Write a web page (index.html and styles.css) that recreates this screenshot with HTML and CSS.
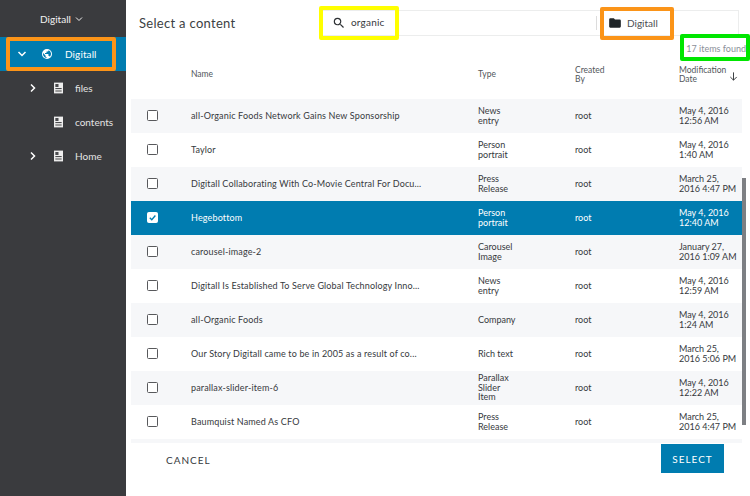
FILE: index.html
```html
<!DOCTYPE html>
<html lang="en">
<head>
<meta charset="UTF-8">
<meta name="viewport" content="width=device-width, initial-scale=1.0">
<title>Select a content</title>
<link rel="stylesheet" href="styles.css">
</head>
<body>

<!-- Site tree -->
<aside class="sidebar">
  <div class="site-switch">Digitall
    <svg class="switch-caret" viewBox="0 0 10 10"><path d="M2 3.5 5 6.5 8 3.5"/></svg>
  </div>
  <div class="tree-row tree-row-active">
    <svg class="chev" viewBox="0 0 10 10"><path d="M1.5 3 5 6.5 8.5 3"/></svg>
    <svg class="globe" viewBox="0 0 24 24"><path d="M12 2a10 10 0 1 0 0 20 10 10 0 0 0 0-20zm-1 17.900A8 8 0 0 1 4.200 10.200L9 15v1c0 1.100.9 2 2 2v1.900zm6.900-2.500A2 2 0 0 0 16 16h-1v-3a1 1 0 0 0-1-1H8v-2h2a1 1 0 0 0 1-1V7h2a2 2 0 0 0 2-2v-.4a8 8 0 0 1 2.900 12.800z"/></svg>
    <span>Digitall</span>
  </div>
  <div class="tree-row tree-child">
    <svg class="chev" viewBox="0 0 10 10"><path d="M3 1.500 6.500 5 3 8.500"/></svg>
    <svg class="doc" viewBox="0 0 10 12"><path d="M0 0h10v12H0z" fill="#eee"/><path d="M1.500 1.500h3.500v3.500h-3.500zM1.500 6h7v1h-7z" fill="#4a4b4e"/><path d="M1.500 8h7v2.500h-7z" fill="#9a9a9a"/></svg>
    <span>files</span>
  </div>
  <div class="tree-row tree-child">
    <span class="chev"></span>
    <svg class="doc" viewBox="0 0 10 12"><path d="M0 0h10v12H0z" fill="#eee"/><path d="M1.500 1.500h3.500v3.500h-3.500zM1.500 6h7v1h-7z" fill="#4a4b4e"/><path d="M1.500 8h7v2.500h-7z" fill="#9a9a9a"/></svg>
    <span>contents</span>
  </div>
  <div class="tree-row tree-child">
    <svg class="chev" viewBox="0 0 10 10"><path d="M3 1.500 6.500 5 3 8.500"/></svg>
    <svg class="doc" viewBox="0 0 10 12"><path d="M0 0h10v12H0z" fill="#eee"/><path d="M1.500 1.500h3.500v3.500h-3.500zM1.500 6h7v1h-7z" fill="#4a4b4e"/><path d="M1.500 8h7v2.500h-7z" fill="#9a9a9a"/></svg>
    <span>Home</span>
  </div>
</aside>

<main class="main">
  <header class="top">
    <h1 class="title">Select a content</h1>
    <div class="search">
      <svg class="search-icon" viewBox="0 0 24 24"><path d="M15.500 14h-.79l-.28-.27A6.470 6.470 0 0 0 16 9.500 6.500 6.500 0 1 0 9.500 16c1.610 0 3.090-.59 4.230-1.570l.27.28v.79l5 4.990L20.490 19l-4.990-5zm-6 0C7.010 14 5 11.990 5 9.500S7.010 5 9.500 5 14 7.010 14 9.500 11.990 14 9.500 14z"/></svg>
      <span class="search-text">organic</span>
      <div class="search-path">
        <svg class="folder" viewBox="0 0 24 24"><path d="M10 4H4a2 2 0 0 0-2 2v12c0 1.100.9 2 2 2h16a2 2 0 0 0 2-2V8a2 2 0 0 0-2-2h-8l-2-2z"/></svg>
        <span>Digitall</span>
      </div>
    </div>
  </header>
  <div class="found">17 items found</div>

  <div class="row head">
    <span></span>
    <span>Name</span>
    <span>Type</span>
    <span>Created<br>By</span>
    <span class="date-head">Modification<br>Date
      <svg class="sort" viewBox="0 0 24 24"><path d="M12 3v17M5 13l7 7 7-7"/></svg>
    </span>
  </div>

  <div class="table">
    <div class="rows" id="rows"></div>
    <div class="scrollbar"></div>
  </div>

  <footer class="footer">
    <button class="btn-cancel">CANCEL</button>
    <button class="btn-select">SELECT</button>
  </footer>
</main>

<!-- Highlight boxes drawn over the screenshot -->
<div class="mark mark-tree"></div>
<div class="mark mark-search"></div>
<div class="mark mark-path"></div>
<div class="mark mark-found"></div>

<script>
  const items = [
    { name: "all-Organic Foods Network Gains New Sponsorship", type: "News<br>entry", date: "May 4, 2016<br>12:56 AM" },
    { name: "Taylor", type: "Person<br>portrait", date: "May 4, 2016<br>1:40 AM" },
    { name: "Digitall Collaborating With Co-Movie Central For Docu...", type: "Press<br>Release", date: "March 25,<br>2016 4:47 PM" },
    { name: "Hegebottom", type: "Person<br>portrait", date: "May 4, 2016<br>12:40 AM", selected: true },
    { name: "carousel-image-2", type: "Carousel<br>Image", date: "January 27,<br>2016 1:09 AM" },
    { name: "Digitall Is Established To Serve Global Technology Inno...", type: "News<br>entry", date: "May 4, 2016<br>12:59 AM" },
    { name: "all-Organic Foods", type: "Company", date: "May 4, 2016<br>1:24 AM" },
    { name: "Our Story Digitall came to be in 2005 as a result of co...", type: "Rich text", date: "March 25,<br>2016 5:06 PM" },
    { name: "parallax-slider-item-6", type: "Parallax<br>Slider<br>Item", date: "May 4, 2016<br>12:22 AM" },
    { name: "Baumquist Named As CFO", type: "Press<br>Release", date: "March 25,<br>2016 4:47 PM" }
  ];

  const rows = document.getElementById('rows');

  items.forEach(item => {
    const row = document.createElement('div');
    row.classList.add('row', 'item');
    if (item.selected) row.classList.add('selected');
    const check = item.selected ? '<svg viewBox="0 0 10 10"><path d="M2 5.200 4.200 7.400 8.200 2.800"/></svg>' : '';
    row.innerHTML =
      '<span class="check">' + check + '</span>' +
      '<span class="name">' + item.name + '</span>' +
      '<span>' + item.type + '</span>' +
      '<span>root</span>' +
      '<span>' + item.date + '</span>';
    rows.appendChild(row);
  });
</script>

</body>
</html>
```

FILE: styles.css
```css
* {
  box-sizing: border-box;
}

body {
  margin: 0;
  width: 750px;
  height: 496px;
  overflow: hidden;
  display: flex;
  font-family: "Lato", "Noto Sans", sans-serif;
  color: #36393d;
  background-color: #fff;
}

/* Sidebar */
.sidebar {
  width: 126px;
  flex-shrink: 0;
  background-color: #3a3b3e;
  color: #e4e4e4;
  font-size: 10px;
}

.site-switch {
  height: 37px;
  display: flex;
  align-items: center;
  justify-content: center;
  gap: 3px;
  padding-top: 1px;
  padding-right: 2px;
  color: #f2f2f2;
}

.switch-caret {
  width: 10px;
  height: 10px;
  fill: none;
  stroke: #f2f2f2;
  stroke-width: 1;
}

.tree-row {
  height: 34px;
  display: flex;
  align-items: center;
}

.tree-row-active {
  background-color: #007cb0;
  color: #fff;
  padding-left: 17px;
}

.tree-child {
  padding-left: 28px;
}

.chev {
  width: 10px;
  height: 10px;
  flex-shrink: 0;
  fill: none;
  stroke: #fff;
  stroke-width: 1.500;
}

.globe {
  width: 12px;
  height: 12px;
  margin-left: 14px;
  fill: #fff;
}

.tree-row-active span {
  margin-left: 12px;
  letter-spacing: 0.1px;
  padding-bottom: 1px;
}

.doc {
  width: 9px;
  height: 12px;
  margin-left: 16px;
}

.tree-child span:last-child {
  margin-left: 12px;
}

/* Main column */
.main {
  flex: 1;
  min-width: 0;
  display: flex;
  flex-direction: column;
}

.top {
  height: 36px;
  display: flex;
  align-items: flex-start;
  padding: 10px 11px 0 13px;
}

.title {
  margin: 0;
  width: 181px;
  flex-shrink: 0;
  font-size: 13px;
  line-height: 26px;
  font-weight: 400;
  letter-spacing: 0.3px;
  color: #3c3f43;
}

.search {
  flex: 1;
  height: 26px;
  display: flex;
  align-items: center;
  border: 1px solid #eceded;
  padding-left: 11px;
  font-size: 10px;
}

.search-icon {
  width: 14px;
  height: 14px;
  fill: #2d3033;
}

.search-text {
  flex: 1;
  margin-left: 5px;
  padding-bottom: 2px;
  letter-spacing: 0.2px;
}

.search-path {
  width: 142px;
  height: 14px;
  display: flex;
  align-items: center;
  border-left: 1px solid #dcdcdc;
  padding-left: 11px;
  color: #4b4e52;
}

.folder {
  width: 14px;
  height: 14px;
  fill: #1f2528;
  margin-right: 5px;
}

.found {
  height: 23px;
  padding: 7px 4px 0 0;
  text-align: right;
  font-size: 9px;
  color: #8a9099;
}

/* Rows share one grid so the columns line up with the header */
.row {
  display: grid;
  grid-template-columns: 60px 287px 97px 104px 1fr;
  align-items: center;
  font-size: 9px;
  line-height: 9.500px;
}

.head {
  height: 40px;
  margin-left: 5px;
  padding-bottom: 8px;
  color: #52565b;
  font-size: 8.500px;
}

.date-head {
  position: relative;
}

.sort {
  position: absolute;
  top: 5px;
  right: 11px;
  width: 11px;
  height: 11px;
  fill: none;
  stroke: #2d3033;
  stroke-width: 2;
}

.table {
  position: relative;
  height: 344px;
  margin-left: 5px;
  margin-right: 8px;
  background-color: #f6f7f9;
}

.item {
  height: 34px;
  padding-bottom: 1px;
  background-color: #fff;
}

.item:nth-child(odd) {
  background-color: #f6f7f9;
}

.item.selected {
  background-color: #007cb0;
  color: #fff;
}

.name {
  letter-spacing: 0.15px;
}

.check {
  width: 11px;
  height: 11px;
  margin-left: 16px;
  border: 1.500px solid #58595c;
  border-radius: 1.500px;
  background-color: #fff;
  display: flex;
}

.selected .check {
  border-color: #fff;
}

.check svg {
  width: 100%;
  height: 100%;
  fill: none;
  stroke: #007cb0;
  stroke-width: 1.500;
}

.scrollbar {
  position: absolute;
  top: 79px;
  right: -4px;
  width: 4px;
  height: 247px;
  background-color: #7d7f83;
}

/* Footer */
.footer {
  flex: 1;
  display: flex;
  align-items: flex-start;
  justify-content: space-between;
  padding: 1px 26px 0 40px;
}

.footer button {
  font-family: inherit;
  font-size: 10px;
  letter-spacing: 1px;
  border: none;
  cursor: pointer;
}

.btn-cancel {
  height: 30px;
  padding: 0;
  margin-top: 1px;
  background: none;
  color: #36393d;
}

.btn-select {
  width: 63px;
  height: 29px;
  padding: 0;
  background-color: #007cb0;
  color: #fff;
}

/* Coloured highlight boxes */
.mark {
  position: absolute;
  border-style: solid;
  border-radius: 2px;
}

.mark-tree {
  left: 6px;
  top: 37px;
  width: 110px;
  height: 34px;
  border-width: 4px;
  border-color: #fb9418;
}

.mark-search {
  left: 319px;
  top: 6px;
  width: 80px;
  height: 34px;
  border-width: 4px;
  border-color: #ffff00;
}

.mark-path {
  left: 600px;
  top: 7px;
  width: 74px;
  height: 33px;
  border-width: 4px;
  border-color: #fb9418;
}

.mark-found {
  left: 680px;
  top: 34px;
  width: 70px;
  height: 27px;
  border-width: 4px;
  border-color: #00e600;
}
```
